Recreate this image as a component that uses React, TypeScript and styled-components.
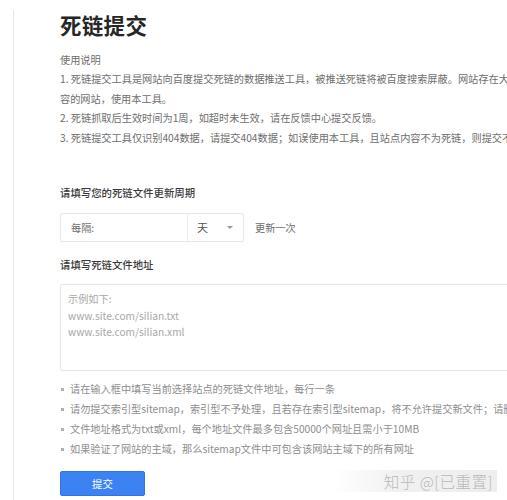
import React from 'react';
import styled, { createGlobalStyle } from 'styled-components';

const GlobalStyle = createGlobalStyle`
  html, body {
    margin: 0;
    padding: 0;
    background: #ffffff;
  }
  body {
    font-family: 'Noto Sans CJK SC', 'Noto Sans', 'Liberation Sans', sans-serif;
    overflow: hidden;
  }
`;

const Page = styled.div`
  position: relative;
  width: 507px;
  height: 500px;
  overflow: hidden;
  background: #fff;
  padding-left: 13px;
  box-sizing: border-box;
`;

const Panel = styled.div`
  border-left: 1px solid #e6e6e6;
  height: 100%;
  padding-left: 46px;
  width: 560px;
  box-sizing: border-box;
`;

const Title = styled.h1`
  margin: 10px 0 0;
  font-size: 21.5px;
  line-height: 30px;
  font-weight: 700;
  color: #262626;
  letter-spacing: 0.3px;
`;

const Notes = styled.div`
  margin-top: 10px;
  font-size: 10.2px;
  line-height: 19.4px;
  color: #6e6e6e;
`;

const NoteLine = styled.div`
  white-space: nowrap;
`;

const SectionLabel = styled.div<{ $top: number }>`
  margin-top: ${p => p.$top}px;
  font-size: 10.4px;
  line-height: 19px;
  color: #3a3a3a;
  font-weight: 500;
`;

const PeriodRow = styled.div`
  display: flex;
  align-items: center;
  margin-top: 10.5px;
`;

const PeriodBox = styled.div`
  display: flex;
  width: 184px;
  height: 29px;
  border: 1px solid #e8e8e8;
  border-radius: 2px;
  box-sizing: border-box;
  font-size: 10.2px;
  color: #6e6e6e;
`;

const PeriodInput = styled.div`
  flex: 1;
  display: flex;
  align-items: center;
  padding-left: 10px;
  border-right: 1px solid #ececec;
`;

const PeriodSelect = styled.div`
  width: 55px;
  display: flex;
  align-items: center;
  justify-content: space-between;
  padding: 0 10px 0 9px;
  box-sizing: border-box;
  font-size: 11px;
  color: #555;
`;

const Caret = styled.span`
  width: 0;
  height: 0;
  border-left: 3px solid transparent;
  border-right: 3px solid transparent;
  border-top: 3px solid #999;
`;

const PeriodSuffix = styled.span`
  margin-left: 11px;
  font-size: 10.2px;
  color: #6e6e6e;
`;

const AddressArea = styled.div`
  margin-top: 10.5px;
  width: 470px;
  height: 87px;
  border: 1px solid #e6e6e6;
  border-radius: 2px;
  box-sizing: border-box;
  padding: 6px 0 0 7px;
  font-size: 10.2px;
  line-height: 16.6px;
  color: #a8a8a8;
`;

const Tips = styled.ul`
  list-style: none;
  margin: 8px 0 0;
  padding: 0;
  font-size: 10.2px;
  line-height: 20px;
  color: #8e8e8e;
`;

const Tip = styled.li`
  position: relative;
  padding-left: 10px;
  white-space: nowrap;
  &::before {
    content: '';
    position: absolute;
    left: 1px;
    top: 9px;
    width: 3px;
    height: 3px;
    background: #b0b0b0;
  }
`;

const SubmitButton = styled.button`
  margin-top: 12px;
  width: 85px;
  height: 25px;
  border: 1px solid #2f74e6;
  border-radius: 2px;
  background: #3c82f2;
  color: #fff;
  font-family: inherit;
  font-size: 10.4px;
  cursor: pointer;
`;

const Watermark = styled.div`
  position: absolute;
  right: 10px;
  bottom: 8px;
  padding: 1px 4px 1px 50px;
  font-size: 15.5px;
  font-weight: 300;
  line-height: 20px;
  color: #b8b8b8;
  letter-spacing: 0.5px;
  background: linear-gradient(90deg, rgba(240, 240, 240, 0) 0%, rgba(238, 238, 238, 0.85) 40%, rgba(236, 236, 236, 0.9) 100%);
`;

const notes = [
  '使用说明',
  '1. 死链提交工具是网站向百度提交死链的数据推送工具，被推送死链将被百度搜索屏蔽。网站存在大量死链内',
  '容的网站，使用本工具。',
  '2. 死链抓取后生效时间为1周，如超时未生效，请在反馈中心提交反馈。',
  '3. 死链提交工具仅识别404数据，请提交404数据；如误使用本工具，且站点内容不为死链，则提交不予处理。',
];

const tips = [
  '请在输入框中填写当前选择站点的死链文件地址，每行一条',
  '请勿提交索引型sitemap，索引型不予处理，且若存在索引型sitemap，将不允许提交新文件；请删除',
  '文件地址格式为txt或xml，每个地址文件最多包含50000个网址且需小于10MB',
  '如果验证了网站的主域，那么sitemap文件中可包含该网站主域下的所有网址',
];

export default function App() {
  return (
    <>
      <GlobalStyle />
      <Page>
        <Panel>
          <Title>死链提交</Title>
          <Notes>
            {notes.map((line, i) => (
              <NoteLine key={i}>{line}</NoteLine>
            ))}
          </Notes>

          <SectionLabel $top={36}>请填写您的死链文件更新周期</SectionLabel>
          <PeriodRow>
            <PeriodBox>
              <PeriodInput>每隔:</PeriodInput>
              <PeriodSelect>
                天
                <Caret />
              </PeriodSelect>
            </PeriodBox>
            <PeriodSuffix>更新一次</PeriodSuffix>
          </PeriodRow>

          <SectionLabel $top={13}>请填写死链文件地址</SectionLabel>
          <AddressArea>
            示例如下:
            <br />
            www.site.com/silian.txt
            <br />
            www.site.com/silian.xml
          </AddressArea>

          <Tips>
            {tips.map((tip, i) => (
              <Tip key={i}>{tip}</Tip>
            ))}
          </Tips>

          <SubmitButton>提交</SubmitButton>
        </Panel>
        <Watermark>知乎 @[已重置]</Watermark>
      </Page>
    </>
  );
}
